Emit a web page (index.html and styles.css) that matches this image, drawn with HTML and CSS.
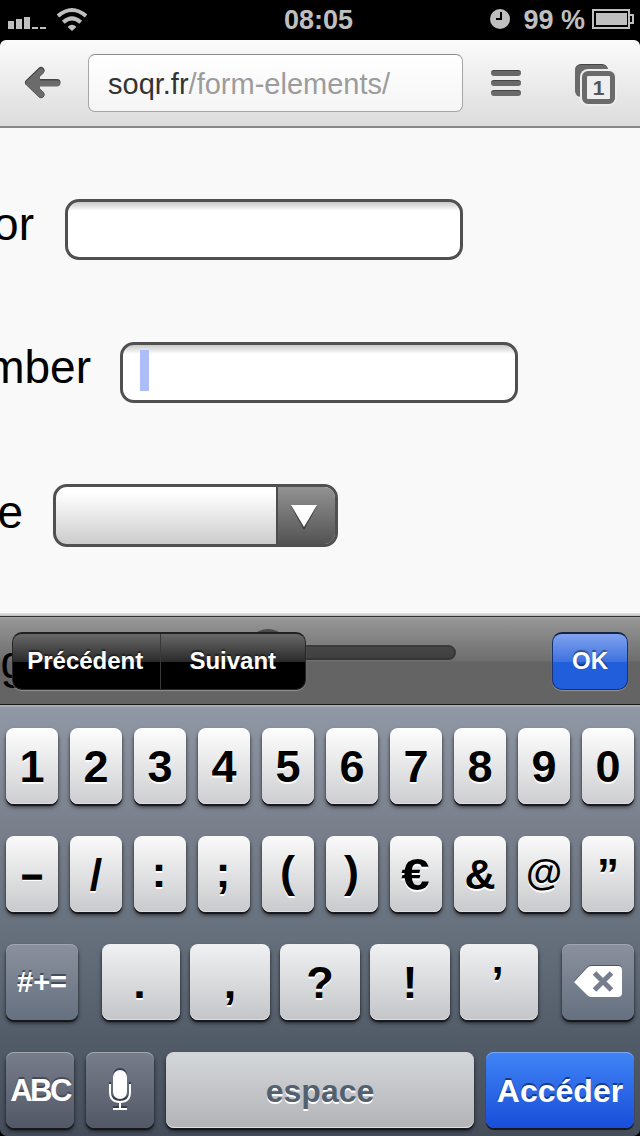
FILE: index.html
```html
<!DOCTYPE html>
<html lang="fr">
<head>
<meta charset="utf-8">
<title>soqr.fr/form-elements/</title>
<link rel="stylesheet" href="styles.css">
</head>
<body>
<div class="screen">
  <header class="status">
    <div class="status-left">
      <svg class="signal" width="38" height="14" viewBox="0 0 38 14" fill="#bfbfbf"><path d="M0 5h6v8H0zM8 3h6v10H8zM16 1h6v12h-6zM24 11h6v2h-6zM32 11h6v2h-6z"/></svg>
      <svg class="wifi" width="32" height="24" viewBox="0 0 32 24" fill="none" stroke="#bfbfbf" stroke-width="4"><path d="M2 9Q16-3 30 9M7.300 15.300q8.700-8 17.400 0"/><path d="M11.500 20q4.500-4.500 9 0L16 24z" fill="#bfbfbf" stroke="none"/></svg>
    </div>
    <div class="clock">08:05</div>
    <div class="status-right">
      <svg width="20" height="20" viewBox="0 0 20 20"><circle cx="10" cy="10" r="10" fill="#bfbfbf"/><path d="M11 3v7H6" fill="none" stroke="#000" stroke-width="2"/></svg>
      <span class="percent">99 %</span>
      <svg width="42" height="20" viewBox="0 0 42 20"><path d="M1 1h36v18H1zM38 6h3v8h-3" fill="none" stroke="#bfbfbf" stroke-width="2"/><path d="M4 4h31v12H4z" fill="#bfbfbf"/></svg>
    </div>
  </header>
  <nav class="toolbar">
    <svg class="back" width="38" height="34" viewBox="0 0 38 34" fill="none" stroke-linecap="round" stroke-linejoin="round"><g stroke="#444"><path d="M17 4.500 4.500 16.500 17 28.500" stroke-width="7"/><path d="M8 16.500h25" stroke-width="7"/></g><g stroke="#6b6b6b"><path d="M17 5.500 5 17l12 11.500M8 17.500h25" stroke-width="6"/><path d="M6 17l9-9v18z" fill="#6b6b6b" stroke-width="2"/></g></svg>
    <div class="address"><span class="host">soqr.fr</span>/form-elements/</div>
    <div class="menu"><i></i><i></i><i></i></div>
    <div class="tabs"><span class="tab-back"></span><span class="tab-front">1</span></div>
  </nav>
  <main class="page">
    <div class="row row-color"><span class="label">or</span><span class="field"></span></div>
    <div class="row row-number"><span class="label">mber</span><span class="field"><i class="caret"></i></span></div>
    <div class="row row-date"><span class="label">e</span><span class="select"><span class="arrow"><svg width="26" height="25" viewBox="0 0 26 25"><path d="M0 1h26L13 25z" fill="#3c3c3c"/><path d="M0 0h26L13 22z" fill="#fff"/></svg></span></span></div>
    <div class="row row-range"><span class="label">g</span><span class="range"><i class="thumb"></i></span></div>
  </main>
  <div class="accessory">
    <div class="segments"><span>Précédent</span><span>Suivant</span></div>
    <div class="ok">OK</div>
  </div>
  <section class="keyboard">
    <div class="keys wide-gap"><b>1</b><b>2</b><b>3</b><b>4</b><b>5</b><b>6</b><b>7</b><b>8</b><b>9</b><b>0</b></div>
    <div class="keys wide-gap second"><b class="dash">–</b><b>/</b><b class="colon">:</b><b class="colon">;</b><b class="paren">(</b><b class="paren">)</b><b><span class="euro">€</span></b><b class="amp">&amp;</b><b class="at">@</b><b class="quote">”</b></div>
    <div class="keys third">
      <b class="dark symbols">#+=</b>
      <div class="punctuation"><b>.</b><b>,</b><b>?</b><b>!</b><b class="quote">’</b></div>
      <b class="dark"><svg width="48" height="34" viewBox="0 0 48 34"><path d="M17 0h27q4 0 4 4v24q0 4-4 4H17q-2 0-4-2L0 16 13 2q2-2 4-2z" fill="#4c5461"/><path d="M17 1h27q4 0 4 4v23q0 4-4 4H17q-2 0-4-2L0 17 13 3q2-2 4-2z" fill="#fff"/><path d="M20.500 8 37.500 25M37.500 8 20.500 25" stroke="#757e8e" stroke-width="5"/></svg></b>
    </div>
    <div class="keys fourth">
      <b class="dark abc">ABC</b>
      <b class="dark"><svg width="24" height="44" viewBox="0 0 24 44"><g fill="none" stroke="#383e4b" stroke-width="2"><path d="M2 14v8q0 9.500 10 9.500T22 22v-8M12 32v6M5 39h14"/></g><rect x="5" y="0" width="14" height="31" rx="7" fill="#383e4b"/><rect x="5" y="2" width="14" height="29" rx="7" fill="#fff"/><path d="M2 16v8q0 10 10 10t10-10v-8M12 34v7M5 41h14" fill="none" stroke="#fff" stroke-width="2"/></svg></b>
      <b class="space">espace</b>
      <b class="go">Accéder</b>
    </div>
  </section>
</div>
</body>
</html>
```
FILE: styles.css
```css
* { box-sizing: border-box; }
body { margin: 0; background: #000; font-family: "Liberation Sans", Arial, sans-serif; }
svg { display: block; flex: none; }
.screen { position: relative; display: flex; flex-direction: column; width: 640px; height: 1136px; overflow: hidden; background: #000; }

.status { display: grid; grid-template-columns: 1fr auto 1fr; height: 40px; color: #bfbfbf; font-size: 27px; font-weight: bold; line-height: 40px; }
.status-left { display: flex; padding: 7px 0 0 8px; gap: 10px; }
.signal { margin-top: 9px; }
.clock { padding-right: 3px; }
.status-right { display: flex; justify-content: flex-end; padding: 9px 6px 0 0; }
.percent { margin: -9px 7px 0 13px; white-space: nowrap; }

.toolbar { display: flex; flex: none; height: 88px; padding: 14px 24px 0; border-radius: 6px 6px 0 0; border-bottom: 2px solid #878787; background: linear-gradient(#fbfbfb, #f2f2f2 30%, #dcdcdc); }
.back { margin: 12px 26px 0 0; }
.address { width: 376px; height: 58px; padding-left: 19px; border: 1px solid #a6a6a6; border-top: 1px solid #8e8e8e; border-radius: 7px; background: linear-gradient(#fff, #f5f5f5); color: #9c9c9c; font-size: 29px; line-height: 59px; }
.host { color: #333; }
.menu { display: flex; flex-direction: column; gap: 4px; width: 30px; margin: 16px 0 0 28px; }
.menu i { height: 6px; border-radius: 3px; background: #696969; border-top: 1px solid #444; }
.tabs { position: relative; width: 41px; height: 40px; margin: 10px 0 0 54px; }
.tab-back { position: absolute; left: 0; top: 0; width: 33px; height: 33px; border-radius: 6px; background: #6a6a6a; border-top: 1px solid #444; }
.tab-front { position: absolute; left: 7px; top: 7px; width: 33px; height: 33px; border: 5px solid #6a6a6a; border-radius: 6px; background: #eee; box-shadow: 0 0 0 2px #ededed; color: #555; font-size: 21px; font-weight: bold; line-height: 24px; text-align: center; }

.page { flex: none; height: 577px; padding-top: 71px; background: #f9f9f9; overflow: hidden; }
.row { display: flex; }
.label { display: flex; justify-content: flex-end; flex: none; font-size: 46px; line-height: 51px; color: #000; }
.row-color { height: 143px; }
.row-color .label { width: 34px; margin-right: 31px; }
.row-number { height: 142px; }
.row-number .label { width: 91px; margin-right: 29px; }
.row-date { height: 144px; }
.row-date .label { width: 23px; margin: 3px 30px 0 0; }
.field { width: 398px; height: 61px; border: 3px solid #505050; border-radius: 14px; background: linear-gradient(#c9c9c9, #fff 9px); padding: 5px 0 0 17px; }
.caret { display: block; width: 9px; height: 41px; background: #acbdf9; }
.select { display: flex; justify-content: flex-end; width: 285px; height: 63px; border: 3px solid #505050; border-radius: 14px; background: linear-gradient(#fff 10%, #ccc); overflow: hidden; }
.arrow { display: flex; align-items: center; width: 59px; padding: 3px 0 0 13px; border-left: 2px solid #4c4c4c; background: linear-gradient(#929292, #535353); }
.row-range .label { width: 26px; margin: 9px 25px 0 0; }
.range { position: relative; width: 250px; height: 15px; margin: 17px 0 0 155px; border-radius: 8px; background: #8e8e8e; border: 2px solid #777; }
.thumb { position: absolute; left: 38px; top: -18px; width: 44px; height: 44px; border-radius: 50%; background: #858585; }

.accessory { position: absolute; left: 0; top: 613px; width: 640px; height: 92px; display: flex; justify-content: space-between; padding: 19px 12px 0; background: linear-gradient(rgba(0,0,0,.08), rgba(0,0,0,.25) 3px, #303030 3px, #303030 4px, rgba(0,0,0,.32) 4px, rgba(0,0,0,.4) 6px, rgba(0,0,0,.56) 48px, rgba(0,0,0,.6) 49px, rgba(0,0,0,.6) 91px, #171717 91px); color: #fff; font-size: 24px; font-weight: bold; line-height: 57px; text-align: center; text-shadow: 0 -2px 1px rgba(0,0,0,.4); }
.segments { display: flex; width: 294px; height: 58px; border: 1px solid #252525; border-top: 2px solid #202020; border-radius: 10px; background: linear-gradient(#696969, #292929 28px, #000 28px); box-shadow: 0 1px 1px #929292; line-height: 54px; }
.segments span { flex: 1; }
.segments span:first-child { border-right: 1px solid #393939; padding-right: 2px; }
.ok { width: 76px; height: 58px; border: 1px solid #143475; border-top: 2px solid #172448; border-radius: 10px; background: linear-gradient(#81a3ef, #3d71df 28px, #215edc 28px); box-shadow: 0 1px 1px #929292; line-height: 54px; }

.keyboard { flex: none; height: 431px; padding: 23px 6px 0; border-radius: 0 0 7px 7px; background: linear-gradient(#b2b6be, #9098a5 3px, #7a7f8c 120px, #68727f 220px, #515b68 340px, #454d5b); }
.keys { display: flex; height: 108px; }
.wide-gap { gap: 12px; }
.keys b { display: block; flex: none; width: 52px; height: 76px; border-radius: 8px; background: linear-gradient(#fefefe, #cdced1); box-shadow: inset 0 -1px #dedede, 0 2px 1px #15181d, 0 3px 4px rgba(0,0,0,.6); color: #000; font-size: 45px; line-height: 77px; text-align: center; text-shadow: 0 2px #fff; }
.second b { background: linear-gradient(#fafafa, #c9cacd); }
.keys .dash { font-size: 37px; -webkit-text-stroke: 1.500px #000; }
.keys .colon { line-height: 72px; padding-right: 2px; }
.keys .paren { line-height: 71px; padding-right: 1px; }
.euro { display: inline-block; transform: scaleX(1.14); }
.keys .amp { font-size: 43px; }
.keys .at { font-size: 37px; line-height: 74px; }
.keys .quote { font-size: 44px; }
.third { justify-content: space-between; }
.punctuation { display: flex; gap: 10px; }
.punctuation b { width: 80px; background: linear-gradient(#f0f1f3, #c4c5c8); }
.punctuation b:first-child, .punctuation b:last-child { width: 78px; padding-right: 3px; }
.keys .dark { display: flex; align-items: center; justify-content: center; width: 72px; background: linear-gradient(#8b909d, #657080); box-shadow: inset 0 1px #a1a6b0, 0 2px 1px #15181d, 0 3px 4px rgba(0,0,0,.6); color: #fff; text-shadow: 0 -2px #454c59; }
.keys .symbols { font-size: 29px; line-height: 74px; }
.fourth { gap: 12px; }
.fourth .dark { width: 68px; background: linear-gradient(#777e8a, #525866); }
.fourth .abc { font-size: 31px; letter-spacing: -2.500px; }
.fourth .space { width: 308px; font-size: 32px; line-height: 78px; color: #536070; background: linear-gradient(#d4d7d9, #b2b3b7); }
.fourth .go { width: 148px; font-size: 32px; line-height: 78px; color: #fff; background: linear-gradient(#4084f5, #194eda); text-shadow: 0 -2px #193a84; box-shadow: inset 0 1px #77a7f7, 0 2px 1px #15181d; }
```
